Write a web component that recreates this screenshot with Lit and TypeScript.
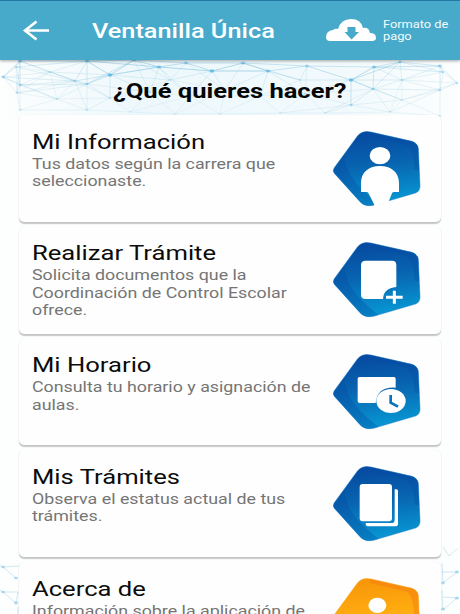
import { LitElement, html, css, svg } from "lit";
import { customElement, property } from "lit/decorators.js";

const stretched = css`
  .t { display: block; width: max-content; white-space: nowrap; transform-origin: 0 50%; }
`;

@customElement("net-pattern")
class NetPattern extends LitElement {
  static styles = css`
    :host { display: block; }
    .net { display: block; width: 460px; height: 554px; }
  `;
  render() {
    const nodes: [number, number, number][] = [
      [20, 1, .8], [87, 1, .8], [110, 15, 1], [134, 0, .8], [159, 7, .9], [186, 3, .7], [212, 11, 1], [243, 3, .8], [268, 11, .9],
      [307, 6, .6], [351, 20, 1], [374, 7, .8], [400, 2, .6], [440, 6, .7], [3, 17, .6], [20, 25, .5], [16, 7, .4],
      [75, 21, .4], [87, 24, .5], [17, 33, .3], [57, 39, .25], [20, 50, .3], [87, 50, .3], [110, 38, .3], [150, 32, .2],
      [190, 36, .2], [225, 30, .2], [260, 36, .2], [305, 34, .2], [351, 45, .5], [373, 29, .5], [440, 30, .4], [457, 23, .4],
      [443, 12, .4], [402, 20, .3], [402, 40, .2], [440, 56, .3], [130, 52, .15], [175, 54, .15], [220, 54, .15], [280, 53, .15],
      [325, 53, .2], [390, 52, .2], [50, 12, .2], [300, 20, .3], [170, 20, .2],
    ];
    const lines = [];
    for (let i = 0; i < nodes.length; i++)
      for (let j = i + 1; j < nodes.length; j++) {
        const [a, b, o] = nodes[i], [c, d, p] = nodes[j];
        if (Math.hypot((a - c) * .45, b - d) < 33)
          lines.push(svg`<line x1=${a} y1=${b} x2=${c} y2=${d} opacity=${o * p * .5 + .1}></line>`);
      }
    return html`<svg class="net" viewBox="0 0 460 554">
      <defs>
        <linearGradient id="w" x2="1"><stop offset="0" stop-color="#d7eff8" stop-opacity="0"/><stop offset=".3" stop-color="#d7eff8" stop-opacity=".4"/><stop offset=".75" stop-color="#d7eff8" stop-opacity=".3"/><stop offset="1" stop-color="#d7eff8" stop-opacity="0"/></linearGradient>
      </defs>
      <rect width="460" height="60" fill="url(#w)"/>
      <g stroke="#5fb2d4" stroke-width=".85">${lines}</g>
      <g fill="#4fb2e4">${nodes.map(([x, y, o]) => svg`<ellipse cx=${x} cy=${y} rx=${1 + o * 1.3} ry=${.9 + o * .8} opacity=${o * .7}></ellipse>`)}</g>
      <g stroke="#8cc5e0" stroke-width=".8" fill="none" opacity=".5">
        <path d="M0 505L3 507L16 518M3 507L19 506M0 530L3 532L16 543L18 532L3 532M18 547V554"/>
        <path d="M443 487L449 496L457 489M442 512L457 512L443 523L442 503M443 537L457 538L443 550L442 530"/>
      </g>
      <g fill="#72b9de" opacity=".5"><ellipse cx="3" cy="507" rx="1.8" ry="1.2"/><ellipse cx="16" cy="518" rx="2" ry="1.3"/><ellipse cx="3" cy="532" rx="1.8" ry="1.3"/><ellipse cx="16" cy="543" rx="2" ry="1.4"/><ellipse cx="457" cy="512" rx="2" ry="1.4"/><ellipse cx="443" cy="523" rx="1.8" ry="1.4"/><ellipse cx="457" cy="538" rx="2" ry="1.6"/><ellipse cx="443" cy="549" rx="2" ry="1.6"/></g>
    </svg>`;
  }
}

@customElement("penta-icon")
class PentaIcon extends LitElement {
  @property() kind = "";
  static styles = css`
    :host { display: block; }
    .icon { display: block; width: 92px; height: 82px; overflow: visible; }
  `;
  glyph() {
    switch (this.kind) {
      case "person":
        return svg`<ellipse cx="180" cy="107" rx="31" ry="26"/>
          <path d="M123 216V190C123 156 147 138 180 138S237 156 237 190V216H221Q217 216 215 222L204 250L200 264H166L160 248L145 219Q143 216 140 216Z"/>`;
      case "add":
        return svg`<path d="M137 89H216Q229 89 229 102V168Q190 172 189 204H137Q123 204 123 191V102Q123 89 137 89Z"/>
          <path d="M198 199H248M223 179V218" stroke="#fff" stroke-width="9"/>`;
      case "clock":
        return svg`<path d="M119 102H222Q227 102 227 107V134Q172 130 167 180H119Q113 180 113 174V107Q113 102 119 102Z"/>
          <ellipse cx="213" cy="174" rx="44" ry="36"/>
          <path d="M212 156V179L234 191" fill="none" stroke="#0873b8" stroke-width="8"/>`;
      case "pages":
        return svg`<rect x="119" y="87" width="97" height="112" rx="9"/>
          <path d="M224 103H229Q234 103 234 108V206Q234 214 225 214H144Q137 214 137 204H215Q224 204 224 194Z"/>`;
      default:
        return svg`<ellipse cx="172" cy="115" rx="27" ry="23"/>`;
    }
  }
  render() {
    const gold = this.kind === "about";
    const d = "M43 143Q37 152 43 160L120 245Q134 261 160 256L286 219Q300 214 300 198L295 86Q294 71 276 64L153 36Q129 30 113 47Z";
    return html`<svg class="icon" viewBox="30 24 276 246">
      <defs>
        <linearGradient id="g" x1=".4" y1="0" x2=".55" y2="1">
          <stop offset="0" stop-color=${gold ? "#f79508" : "#0649a0"}/>
          <stop offset=".45" stop-color=${gold ? "#ffab10" : "#0864b0"}/>
          <stop offset="1" stop-color=${gold ? "#ffc31b" : "#079bd5"}/>
        </linearGradient>
        <clipPath id="c"><path d=${d}/></clipPath>
      </defs>
      <path d=${d} fill="url(#g)"/>
      <g clip-path="url(#c)">
        ${gold
          ? svg`<path d="M150 48L260 74Q280 84 282 150L310 150V40L150 20Z" fill="#f47b12" opacity=".45"/>`
          : svg`<path d="M73 105C76 165 120 210 190 262H100L30 160Z" fill="#0648a0" opacity=".32"/>
                <path d="M165 52L250 72Q284 82 283 150L310 150V40Z" fill="#0648a0" opacity=".28"/>`}
      </g>
      <path d=${d} fill="none" stroke=${gold ? "#fba51a" : "#0a70c0"} stroke-width="2" opacity=".7"/>
      <g fill="#fff">${this.glyph()}</g>
    </svg>`;
  }
}

@customElement("menu-card")
class MenuCard extends LitElement {
  @property() heading = "";
  @property() kind = "";
  @property({ attribute: false }) lines: string[] = [];
  static styles = [stretched, css`
    :host { display: block; }
    .card { box-sizing: border-box; height: 106.75px; display: flex; justify-content: space-between; background: #fefefe; border-radius: 5px; box-shadow: 0 1.2px 1.2px rgba(0,0,0,.22), 0 0 1px rgba(0,0,0,.08); padding: 12.5px 18.7px 0 13px; }
    .copy { width: 290px; }
    .title { font-size: 21px; line-height: 28px; color: #0b0b0b; transform: scaleX(1.22); }
    .line { font-size: 14.6px; line-height: 17.5px; color: #757575; transform: scaleX(1.221); }
  `];
  render() {
    return html`<div class="card">
      <div class="copy"><span class="t title">${this.heading}</span>${this.lines.map(l => html`<span class="t line">${l}</span>`)}</div>
      <penta-icon kind=${this.kind}></penta-icon>
    </div>`;
  }
}

@customElement("app-root")
class AppRoot extends LitElement {
  static styles = [stretched, css`
    :host { display: block; position: relative; width: 460px; height: 614px; overflow: hidden; background: #fdfefe; font-family: Roboto, "Liberation Sans", sans-serif; }
    .bar { position: relative; z-index: 1; box-sizing: border-box; height: 60px; display: flex; align-items: center; background: #48aaca; border-top: 1px solid #2578a5; box-shadow: 0 1px 3px rgba(0,0,0,.35); padding-left: 22px; }
    .back { width: 28px; height: 22px; flex: none; }
    .name { width: 183px; margin-left: 42px; padding-top: 1px; font-size: 21px; font-weight: 500; color: #fff; transform: scaleX(1.205); }
    .cloud { width: 52px; height: 24px; margin-left: 50px; flex: none; }
    .pay { margin-left: 6px; padding-top: 1px; font-size: 10.5px; line-height: 12.5px; color: #f4fbfd; }
    .pay .t { transform: scaleX(1.22); }
    .bg { position: absolute; inset: 60px 0 0; }
    .main { position: relative; padding: 0 19px; }
    .ask { height: 55px; padding-left: 94px; }
    .ask .t { font-size: 21px; line-height: 63px; font-weight: 700; color: #050505; transform: scaleX(1.216); }
    .list { display: flex; flex-direction: column; gap: 5px; }
  `];
  render() {
    const items = [
      ["Mi Información", "person", ["Tus datos según la carrera que", "seleccionaste."]],
      ["Realizar Trámite", "add", ["Solicita documentos que la", "Coordinación de Control Escolar", "ofrece."]],
      ["Mi Horario", "clock", ["Consulta tu horario y asignación de", "aulas."]],
      ["Mis Trámites", "pages", ["Observa el estatus actual de tus", "trámites."]],
      ["Acerca de", "about", ["Información sobre la aplicación de"]],
    ] as [string, string, string[]][];
    return html`
      <header class="bar">
        <svg class="back" viewBox="0 0 28 22"><path d="M27 10.5H3M14.5 1.5L3 10.5L14.5 19.5" fill="none" stroke="#fff" stroke-width="2.6"/></svg>
        <span class="t name">Ventanilla Única</span>
        <svg class="cloud" viewBox="0 0 52 24"><path d="M5 22Q1 22 1 18Q1 12 8 11Q10 9 13 10Q16 0 26 0Q36 0 38 9Q44 8 45 14Q51 14 51 19Q51 22 47 22Z" fill="#fff"/><path d="M22.5 8H30.5V13H34L26.5 20.5L19.5 13H22.5Z" fill="#48aaca"/></svg>
        <div class="pay"><span class="t">Formato de</span><span class="t">pago</span></div>
      </header>
      <net-pattern class="bg"></net-pattern>
      <main class="main">
        <div class="ask"><span class="t">¿Qué quieres hacer?</span></div>
        <div class="list">${items.map(([h, k, l]) => html`<menu-card .heading=${h} .kind=${k} .lines=${l}></menu-card>`)}</div>
      </main>`;
  }
}
